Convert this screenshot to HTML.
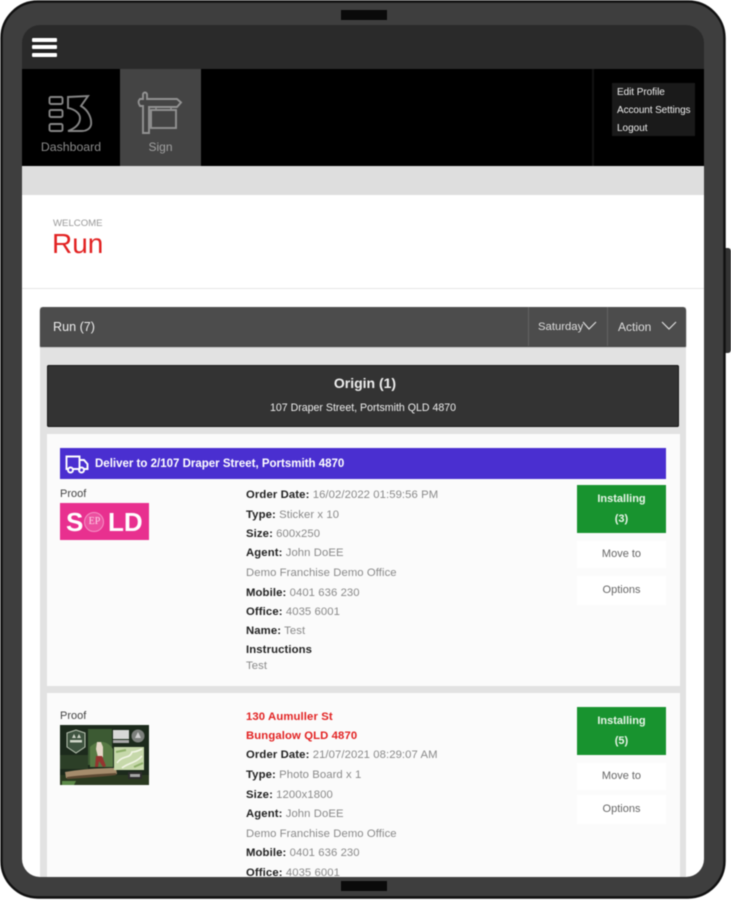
<!DOCTYPE html>
<html><head><meta charset="utf-8">
<style>
html,body{margin:0;padding:0;background:#fff;}
body{width:731px;height:900px;position:relative;overflow:hidden;font-family:"Liberation Sans",sans-serif;}
div,span{position:absolute;white-space:nowrap;}
b{color:#222;font-weight:bold;letter-spacing:.12px}
.l{font-size:11.3px;color:#8a8a8a;left:246px;line-height:14px;letter-spacing:.08px}
.btn{background:#fff;text-align:center;font-size:11px;color:#666;}
</style></head><body>
<div id="wrap" style="left:0;top:0;width:731px;height:900px;filter:blur(.4px)">
<div style="left:722px;top:248px;width:9px;height:105px;background:#333;border-radius:0 3px 3px 0"></div>

<div style="left:10px;top:15px;width:704px;height:870px;background:#fff"></div>
<div style="left:22px;top:25px;width:682px;height:44px;background:#2a2a2a"></div>
<div style="left:22px;top:69px;width:682px;height:97px;background:#000"></div>
<div style="left:120px;top:69px;width:81px;height:97px;background:#444"></div>
<div style="left:592px;top:69px;width:2px;height:97px;background:#111"></div>
<div style="left:22px;top:166px;width:682px;height:29px;background:#dedede"></div>
<div style="left:22px;top:288px;width:682px;height:1px;background:#e6e6e6"></div>

<!-- hamburger -->
<div style="left:31px;top:37px;width:26px;height:21px;background:#222;border-radius:2px"></div>
<div style="left:32px;top:38px;width:25px;height:4px;background:#fff;border-radius:1px"></div>
<div style="left:32px;top:45px;width:25px;height:4px;background:#fff;border-radius:1px"></div>
<div style="left:32px;top:53px;width:25px;height:4px;background:#fff;border-radius:1px"></div>

<!-- nav icons -->
<svg style="position:absolute;left:46px;top:92px" width="48" height="42" viewBox="0 0 48 42" fill="none" stroke="#858585" stroke-width="1.9">
<rect x="3.5" y="5" width="13" height="7" rx="1.5"/><rect x="3.5" y="18" width="13" height="7" rx="1.5"/><rect x="3.5" y="32" width="13" height="7" rx="1.5"/>
<path d="M22 5L42 4L35 14C42 18 46 26 45 33C44 37 40 39 36 39L22 39C30 36 34 32 34 26C34 21 28 17 22 16Z"/>
</svg>
<svg style="position:absolute;left:136px;top:90px" width="48" height="46" viewBox="0 0 48 46" fill="none" stroke="#929292" stroke-width="1.9">
<path d="M7 43V16H4C2 13 2 11 4 9H7V4C8 2 10 2 11 4V9H41L45 12.5L41 17H13V43Z"/>
<rect x="15" y="20" width="25" height="18"/><path d="M20 17V20M35 17V20" stroke-width="1.4"/>
</svg>
<span style="left:22px;top:140px;width:98px;text-align:center;font-size:12.3px;color:#8a8a8a">Dashboard</span>
<span style="left:120px;top:140px;width:81px;text-align:center;font-size:12px;color:#a0a0a0">Sign</span>

<!-- profile menu -->
<div style="left:612px;top:83px;width:83px;height:53px;background:#1a1a1a"></div>
<span style="left:617px;top:87px;font-size:10px;letter-spacing:-.05px;color:#eee;line-height:12px">Edit Profile</span>
<span style="left:617px;top:105px;font-size:10px;letter-spacing:-.1px;color:#eee;line-height:12px">Account Settings</span>
<span style="left:617px;top:123px;font-size:10px;color:#eee;line-height:12px">Logout</span>

<!-- title -->
<span style="left:53px;top:218px;font-size:9.6px;color:#999">WELCOME</span>
<span style="left:52px;top:228px;font-size:28px;color:#e22222">Run</span>

<!-- panel -->
<div style="left:40px;top:307px;width:646px;height:580px;background:#e2e2e2"></div>
<div style="left:40px;top:307px;width:646px;height:39px;background:#4c4c4c;border-radius:3px 3px 0 0;box-shadow:0 1px 1px #333"></div>
<div style="left:528px;top:307px;width:1px;height:39px;background:#636363"></div>
<div style="left:607px;top:307px;width:1px;height:39px;background:#636363"></div>
<span style="left:53px;top:320px;font-size:12.6px;color:#eee">Run (7)</span>
<span style="left:538px;top:320px;font-size:11.3px;color:#ddd;line-height:14px">Saturday</span>
<span style="left:618px;top:320px;font-size:12px;color:#ddd;line-height:14px">Action</span>
<svg style="position:absolute;left:582px;top:320px" width="16" height="12" fill="none" stroke="#ddd" stroke-width="1.2"><path d="M1 2L7 9L14 2"/></svg>
<svg style="position:absolute;left:661px;top:320px" width="16" height="12" fill="none" stroke="#ddd" stroke-width="1.2"><path d="M1 2L8 9L15 2"/></svg>

<!-- origin -->
<div style="left:47px;top:365px;width:632px;height:62px;background:#333;border-radius:2px;box-shadow:inset 0 0 0 1px #181818"></div>
<span style="left:47px;top:375px;width:636px;text-align:center;font-size:14px;font-weight:bold;color:#eee">Origin (1)</span>
<span style="left:47px;top:402px;width:632px;text-align:center;font-size:10.6px;color:#eee">107 Draper Street, Portsmith QLD 4870</span>

<!-- card 1 -->
<div style="left:47px;top:434px;width:633px;height:252px;background:#fbfbfb"></div>
<div style="left:60px;top:448px;width:606px;height:31px;background:#4a2fd0"></div>
<svg style="position:absolute;left:65px;top:454px" width="24" height="21" fill="none" stroke="#fff" stroke-width="1.9"><path d="M3 15H1.5V2.5H14.5V15H8M14.5 6H19L22.5 10V15H19"/><circle cx="5.5" cy="16" r="2.5"/><circle cx="16.5" cy="16" r="2.5"/></svg>
<span style="left:95px;top:458px;font-size:11.5px;font-weight:bold;color:#fff">Deliver to 2/107 Draper Street, Portsmith 4870</span>
<span style="left:60px;top:488px;font-size:11px;color:#444">Proof</span>
<div style="left:60px;top:503px;width:89px;height:37px;background:#e8308f"></div>
<span style="left:66px;top:508px;font-size:26px;line-height:28px;font-weight:bold;color:#fff">S</span>
<div style="left:84px;top:512px;width:18px;height:18px;border-radius:50%;background:#ec4fa0;border:1.5px solid #f58fc5"></div>
<span style="left:84px;top:516px;width:21px;text-align:center;font-size:10px;line-height:12px;font-family:'Liberation Serif',serif;color:#fcd5e8">EP</span>
<span style="left:108px;top:508px;font-size:26px;line-height:28px;font-weight:bold;color:#fff">LD</span>

<span class="l" style="top:488px"><b>Order Date:</b> 16/02/2022 01:59:56 PM</span>
<span class="l" style="top:508px"><b>Type:</b> Sticker x 10</span>
<span class="l" style="top:527px"><b>Size:</b> 600x250</span>
<span class="l" style="top:546px"><b>Agent:</b> John DoEE</span>
<span class="l" style="top:566px">Demo Franchise Demo Office</span>
<span class="l" style="top:586px"><b>Mobile:</b> 0401 636 230</span>
<span class="l" style="top:605px"><b>Office:</b> 4035 6001</span>
<span class="l" style="top:624px"><b>Name:</b> Test</span>
<span class="l" style="top:643px"><b>Instructions</b></span>
<span class="l" style="top:659px">Test</span>

<div style="left:577px;top:485px;width:89px;height:48px;background:#18932f"></div>
<span style="left:577px;top:493px;width:89px;text-align:center;font-size:11px;line-height:13px;font-weight:bold;color:#e8f5e8">Installing</span>
<span style="left:577px;top:513px;width:89px;text-align:center;font-size:11px;line-height:13px;font-weight:bold;color:#e8f5e8">(3)</span>
<div class="btn" style="left:577px;top:541px;width:89px;height:27px;line-height:27px">Move to</div>
<div class="btn" style="left:577px;top:576px;width:89px;height:29px;line-height:29px">Options</div>

<!-- card 2 -->
<div style="left:47px;top:693px;width:633px;height:195px;background:#fbfbfb"></div>
<span style="left:60px;top:710px;font-size:11px;color:#444">Proof</span>
<svg style="position:absolute;left:60px;top:725px" width="89" height="60">
<rect width="89" height="60" fill="#1c2a1c"/>
<path d="M28 4H52V40H28Z" fill="#3c5a33"/>
<path d="M30 22C38 14 48 16 53 24V42H30Z" fill="#587a44"/>
<path d="M0 30H28V44H0Z" fill="#2c3f27"/>
<rect x="0" y="50" width="89" height="10" fill="#2a3a20"/>
<path d="M2 56H16L14 60H2Z" fill="#5c8a48"/>
<path d="M5 47C22 44 42 43 56 43L57 49C42 51 22 53 6 53Z" fill="#a58c6c"/>
<path d="M7 52C22 50 40 49 56 48L56 50C40 52 22 53 7 54Z" fill="#5e4a33"/>
<path d="M37 17H41L43 22L43 32L40 33L38 32L36 24Z" fill="#e6d8c8"/>
<path d="M36 31H42L46 41L43 42L39 36L38 42H35Z" fill="#94342f"/>
<path d="M7 8L16 5L25 8V22L16 28L7 22Z" fill="#3f5440" stroke="#b9c4b2" stroke-width="1"/>
<path d="M12 13L14 9L16 13ZM17 13L19 9L21 13Z" fill="#cfd6c8"/>
<rect x="10" y="15" width="12" height="2.5" fill="#cfd6c8"/>
<rect x="53" y="5" width="16" height="9" fill="#d8d8d8"/>
<rect x="53" y="15" width="16" height="3" fill="#aaa"/>
<circle cx="78" cy="11" r="6.5" fill="#7c807c"/>
<path d="M75 13L78 7L81 13Z" fill="#d0d0d0"/>
<rect x="54" y="22" width="30" height="23" fill="#c6d8aa"/>
<path d="M57 38C62 30 70 34 72 27C75 27 80 25 82 24M62 43C68 38 76 38 82 31" stroke="#f2f5e6" stroke-width="1.6" fill="none"/>
<path d="M56 27L66 25M74 42L83 38" stroke="#8cae68" stroke-width="2" fill="none"/>
<rect x="68" y="47" width="14" height="7" fill="#2c2c2c"/>
<rect x="70" y="49" width="10" height="3" fill="#a5a5a5"/>
</svg>

<span class="l" style="top:710px;color:#e22222;font-weight:bold;letter-spacing:.12px">130 Aumuller St</span>
<span class="l" style="top:729px;color:#e22222;font-weight:bold;letter-spacing:.12px">Bungalow QLD 4870</span>
<span class="l" style="top:748px"><b>Order Date:</b> 21/07/2021 08:29:07 AM</span>
<span class="l" style="top:768px"><b>Type:</b> Photo Board x 1</span>
<span class="l" style="top:788px"><b>Size:</b> 1200x1800</span>
<span class="l" style="top:807px"><b>Agent:</b> John DoEE</span>
<span class="l" style="top:827px">Demo Franchise Demo Office</span>
<span class="l" style="top:846px"><b>Mobile:</b> 0401 636 230</span>
<span class="l" style="top:866px"><b>Office:</b> 4035 6001</span>

<div style="left:577px;top:707px;width:89px;height:48px;background:#18932f"></div>
<span style="left:577px;top:715px;width:89px;text-align:center;font-size:11px;line-height:13px;font-weight:bold;color:#e8f5e8">Installing</span>
<span style="left:577px;top:735px;width:89px;text-align:center;font-size:11px;line-height:13px;font-weight:bold;color:#e8f5e8">(5)</span>
<div class="btn" style="left:577px;top:763px;width:89px;height:27px;line-height:27px">Move to</div>
<div class="btn" style="left:577px;top:795px;width:89px;height:29px;line-height:29px">Options</div>

<!-- device frame on top, with a rounded screen opening -->
<svg style="position:absolute;left:0;top:0" width="731" height="900" viewBox="0 0 731 900">
<path fill-rule="evenodd" fill="#3e3e3e" d="M38 1.5H688A36.5 36.5 0 0 1 724.5 38V861A36.5 36.5 0 0 1 688 897.5H38A36.5 36.5 0 0 1 1.5 861V38A36.5 36.5 0 0 1 38 1.5ZM40 25A18 18 0 0 0 22 43V859A18 18 0 0 0 40 877H686A18 18 0 0 0 704 859V43A18 18 0 0 0 686 25Z"/>
<path fill="none" stroke="#111" stroke-width="2.4" d="M38 1.5H688A36.5 36.5 0 0 1 724.5 38V861A36.5 36.5 0 0 1 688 897.5H38A36.5 36.5 0 0 1 1.5 861V38A36.5 36.5 0 0 1 38 1.5Z"/>
<rect x="341" y="10" width="46" height="10" fill="#0a0a0a"/>
<rect x="341" y="881" width="46" height="10" fill="#0a0a0a"/>
</svg>
</div>
</body></html>
